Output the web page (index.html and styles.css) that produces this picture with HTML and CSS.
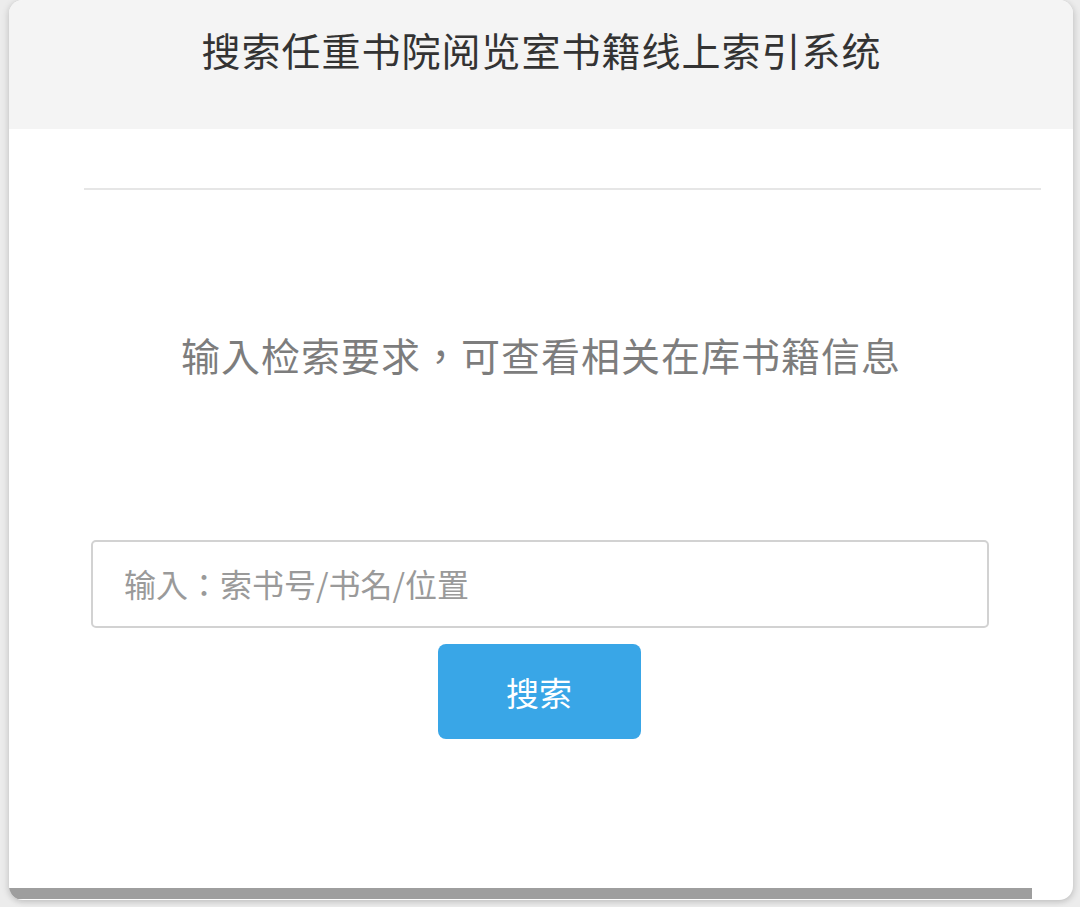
FILE: index.html
```html
<!DOCTYPE html>
<html lang="zh-CN">
<head>
<meta charset="utf-8">
<title>搜索任重书院阅览室书籍线上索引系统</title>
<link rel="stylesheet" href="styles.css">
</head>
<body>
<div class="card">
  <div class="header">
    <h1 class="title">搜索任重书院阅览室书籍线上索引系统</h1>
  </div>
  <div class="divider"></div>
  <p class="subtitle">输入检索要求，可查看相关在库书籍信息</p>
  <div class="search">
    <input class="search-input" type="text" placeholder="输入：索书号/书名/位置">
    <button class="search-btn" type="button">搜索</button>
  </div>
  <div class="spacer"></div>
  <div class="bottom-bar"></div>
</div>
</body>
</html>
```

FILE: styles.css
```css
html, body {
  margin: 0;
  padding: 0;
}
body {
  background: #ececec;
  height: 907px;
  overflow: hidden;
  padding-left: 9px;
  box-sizing: border-box;
  font-family: "Noto Sans CJK SC", "Noto Sans", sans-serif;
}
.card {
  width: 1064px;
  height: 900px;
  background: #ffffff;
  border-radius: 14px;
  box-shadow: -2px 1px 6px rgba(0, 0, 0, 0.10), 2px 2px 6px rgba(0, 0, 0, 0.12);
  display: flex;
  flex-direction: column;
  overflow: hidden;
}
.header {
  height: 129px;
  background: #f4f4f4;
  box-sizing: border-box;
  padding-top: 27px;
}
.title {
  margin: 0;
  text-align: center;
  font-size: 39px;
  line-height: 44px;
  font-weight: 400;
  color: #333333;
  letter-spacing: 1px;
  padding-left: 1px;
}
.divider {
  height: 2px;
  background: #e6e6e6;
  margin: 59px 32px 0 75px;
}
.subtitle {
  margin: 142px 0 0 0;
  text-align: center;
  font-family: "Noto Sans CJK TC", "Noto Sans CJK SC", sans-serif;
  font-feature-settings: "locl" 0;
  font-size: 39px;
  line-height: 44px;
  color: #7d7d7d;
  letter-spacing: 1px;
}
.search {
  margin-top: 164px;
  display: flex;
  flex-direction: column;
  align-items: center;
}
.search-input {
  width: 898px;
  height: 88px;
  box-sizing: border-box;
  border: 2px solid #d2d2d2;
  border-radius: 5px;
  padding: 0 0 3px 31px;
  font-family: "Noto Sans CJK TC", "Noto Sans CJK SC", sans-serif;
  font-feature-settings: "locl" 0;
  font-size: 32px;
  color: #333;
  outline: none;
  margin-left: -2px;
}
.search-input::placeholder {
  color: #9a9a9a;
}
.search-btn {
  margin-top: 16px;
  width: 203px;
  height: 95px;
  border: none;
  border-radius: 8px;
  background: #39a6e7;
  color: #ffffff;
  font-family: "Noto Sans CJK SC", "Noto Sans", sans-serif;
  font-size: 33px;
  margin-left: -4px;
}
.spacer {
  flex: 1;
}
.bottom-bar {
  height: 11px;
  background: #9e9e9e;
  margin-right: 41px;
  margin-bottom: 1px;
}
```
